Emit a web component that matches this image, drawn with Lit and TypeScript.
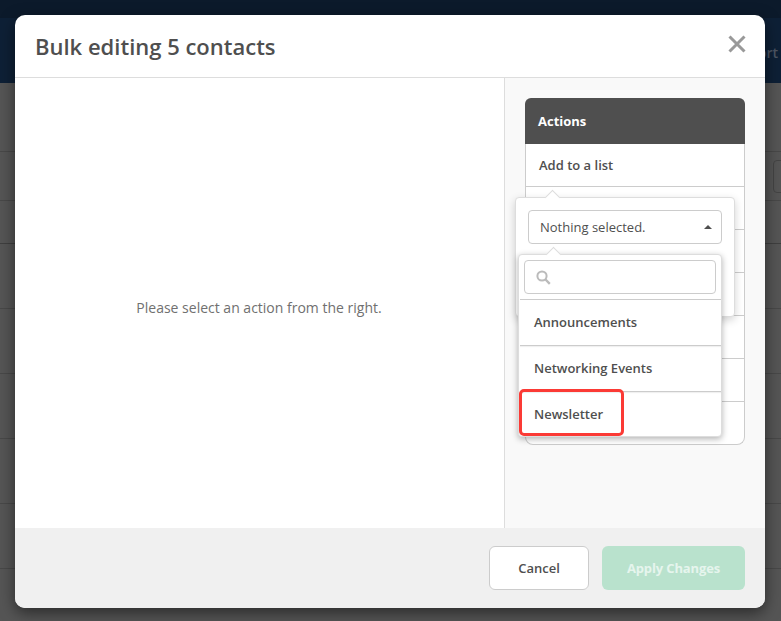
import { LitElement, html, css } from "lit";
import { customElement } from "lit/decorators.js";

@customElement("app-root")
export class AppRoot extends LitElement {
  static styles = css`
    :host { display: block; width: 781px; height: 621px; position: relative; overflow: hidden;
      font-family: "Open Sans", "Liberation Sans", sans-serif; color: #4f4f4f; background: #555; }
    * { box-sizing: border-box; }

    .page { height: 621px; display: flex; flex-direction: column; }
    .topstrip { height: 18px; background: #0c1a2b; }
    .nav { height: 65px; background: #0e2036; display: flex; justify-content: flex-end; align-items: center; padding: 4px 3px 0 0; }
    .nav span { font-size: 14px; font-weight: 600; color: #4d5663; }
    .bgrows { flex: 1; display: flex; flex-direction: column; }
    .bgrow { border-bottom: 1px solid #484848; background: #555; }
    .bgrow.dark { border-bottom-color: #3f3f3f; }
    .r1 { height: 69px; }
    .r2 { height: 49px; display: flex; justify-content: flex-end; align-items: center; }
    .r3 { height: 43px; }
    .r4, .r5, .r6, .r7, .r8 { height: 65px; }
    .ghost { width: 20px; height: 33px; margin-right: -12px; border: 1px solid #444; border-radius: 4px; }

    .modal { position: absolute; left: 15px; top: 15px; width: 750px; height: 593px; background: #fff; border-radius: 10px;
      box-shadow: 0 5px 15px rgba(0, 0, 0, 0.5); display: flex; flex-direction: column; overflow: hidden; }
    .head { height: 63px; flex: none; border-bottom: 1px solid #ddd; display: flex; align-items: center; justify-content: space-between; padding: 0 18px 0 20px; }
    .head h1 { margin: 0; font-size: 22px; font-weight: 600; color: #4f4f4f; line-height: 1; }
    .close { width: 20px; height: 20px; display: block; margin-top: -4px; }
    .body { flex: 1; display: flex; min-height: 0; }
    .left { width: 489px; display: flex; align-items: center; justify-content: center; font-size: 14px; color: #707070; padding: 8px 1px 0 0; }
    .right { flex: 1; background: #f9f9f9; border-left: 1px solid #ddd; padding: 20px 20px 0; }
    .actions { width: 220px; height: 347px; background: #fff; border: 1px solid #ccc; border-top: 0; border-radius: 8px; display: flex; flex-direction: column; }
    .actions header { height: 46px; margin: 0 -1px; flex: none; background: #4f4f4f; color: #fff; border-radius: 6px 6px 0 0; font-size: 13px; font-weight: 700; display: flex; align-items: center; padding-left: 13px; }
    .row { height: 43px; flex: none; border-bottom: 1px solid #ccc; font-size: 13px; font-weight: 600; color: #4f4f4f; display: flex; align-items: center; padding-left: 13px; }
    .row:last-child { border-bottom: 0; }
    .foot { height: 80px; flex: none; background: #f0f0f0; display: flex; justify-content: flex-end; align-items: center; gap: 13px; padding: 0 20px 1px 0; }
    .btn { height: 44px; border-radius: 6px; font-size: 13px; font-weight: 700; display: flex; align-items: center; justify-content: center; }
    .cancel { width: 100px; background: #fff; border: 1px solid #ccc; color: #4f4f4f; font-weight: 600; }
    .apply { width: 143px; background: #b9e2cd; color: #e6f5ed; letter-spacing: -0.01em; }

    .popover { position: absolute; left: 515px; top: 197px; width: 220px; height: 120px; background: #fff; border: 1px solid #ddd; border-radius: 4px; box-shadow: 0 3px 8px rgba(0, 0, 0, 0.18); }
    .arrow { position: absolute; width: 11px; height: 11px; background: #fff; border-left: 1px solid #ddd; border-top: 1px solid #ddd; transform: rotate(45deg); }
    .popover > .arrow { left: 31px; top: -6px; }
    .select { position: absolute; left: 12px; top: 12px; width: 194px; height: 34px; border: 1px solid #ccc; border-radius: 4px; background: #fff; font-size: 13px; color: #4f4f4f; display: flex; align-items: center; justify-content: space-between; padding: 0 9px 0 11px; }
    .caret { width: 0; height: 0; border-left: 4px solid transparent; border-right: 4px solid transparent; border-bottom: 4px solid #4f4f4f; }
    .drop { position: absolute; left: 518px; top: 254px; width: 204px; height: 183px; background: #fff; border: 1px solid #ddd; border-radius: 4px; box-shadow: 0 2px 6px rgba(0, 0, 0, 0.3); display: flex; flex-direction: column; padding: 5px 0 0 1px; }
    .drop > .arrow { left: 29px; top: -6px; }
    .search { position: relative; width: 192px; height: 34px; margin-left: 4px; border: 1px solid #ccc; border-radius: 4px; background: #fff; display: flex; align-items: center; padding-left: 11px; flex: none; }
    .search svg { width: 15px; height: 15px; display: block; }
    .list { margin-top: 5px; flex: 1; display: flex; flex-direction: column; border-top: 1px solid #ccc; }
    .item { height: 46px; flex: none; border-bottom: 1px solid #ccc; font-size: 13px; font-weight: 600; color: #4f4f4f; display: flex; align-items: center; padding: 0 0 2px 14px; box-shadow: 0 1px 1px rgba(0,0,0,.06); }
    .item:last-child { border-bottom: 0; box-shadow: none; height: 45px; }
    .mark { position: absolute; left: 519px; top: 389px; width: 105px; height: 47px; border: 3px solid #fb3a35; border-radius: 5px; pointer-events: none; }
  `;

  render() {
    return html`
      <div class="page">
        <div class="topstrip"></div>
        <div class="nav"><span>ort</span></div>
        <div class="bgrows">
          <div class="bgrow r1"></div>
          <div class="bgrow r2"><div class="ghost"></div></div>
          <div class="bgrow r3 dark"></div>
          <div class="bgrow r4"></div>
          <div class="bgrow r5"></div>
          <div class="bgrow r6"></div>
          <div class="bgrow r7"></div>
          <div class="bgrow r8"></div>
        </div>
      </div>

      <div class="modal">
        <div class="head">
          <h1>Bulk editing 5 contacts</h1>
          <svg class="close" viewBox="0 0 20 20" fill="none" stroke="#999" stroke-width="3">
            <path d="M2.5 2.5 17.5 17.5M17.5 2.5 2.5 17.5"></path>
          </svg>
        </div>
        <div class="body">
          <div class="left">Please select an action from the right.</div>
          <div class="right">
            <div class="actions">
              <header>Actions</header>
              <div class="row">Add to a list</div>
              <div class="row"></div>
              <div class="row"></div>
              <div class="row"></div>
              <div class="row"></div>
              <div class="row"></div>
              <div class="row"></div>
            </div>
          </div>
        </div>
        <div class="foot">
          <div class="btn cancel">Cancel</div>
          <div class="btn apply">Apply Changes</div>
        </div>
      </div>

      <div class="popover">
        <div class="arrow"></div>
        <div class="select">Nothing selected.<span class="caret"></span></div>
      </div>
      <div class="drop">
        <div class="arrow"></div>
        <div class="search">
          <svg viewBox="0 0 15 15" fill="none" stroke="#bbb" stroke-width="2">
            <circle cx="6" cy="6" r="4.6"></circle>
            <path d="M9.5 9.5 13.8 13.8" stroke-width="2.4"></path>
          </svg>
        </div>
        <div class="list">
          <div class="item">Announcements</div>
          <div class="item">Networking Events</div>
          <div class="item">Newsletter</div>
        </div>
      </div>
      <div class="mark"></div>
    `;
  }
}
